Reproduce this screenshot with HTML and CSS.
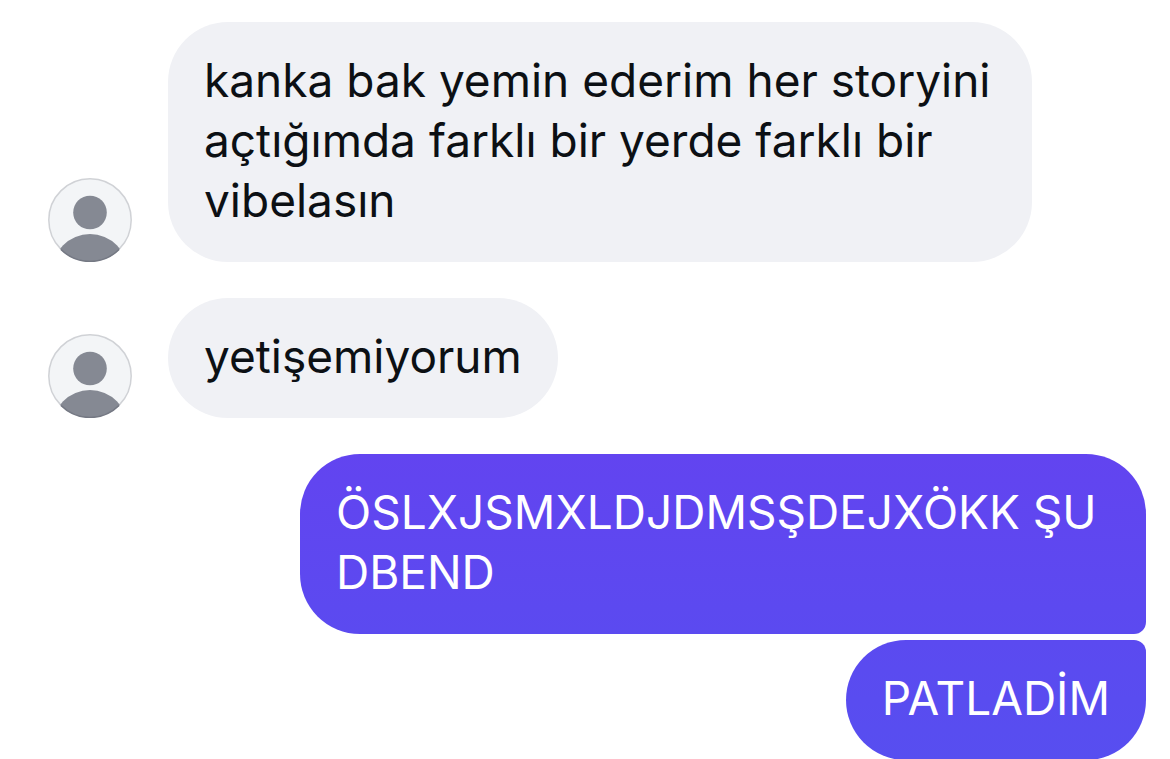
FILE: index.html
```html
<!DOCTYPE html>
<html lang="tr">
<head>
<meta charset="utf-8">
<meta name="viewport" content="width=device-width, initial-scale=1">
<title>Sohbet</title>
<link rel="stylesheet" href="styles.css">
</head>
<body>
<main class="chat">
  <div class="row received">
    <svg class="avatar" viewBox="0 0 84 84" aria-hidden="true">
      <defs><clipPath id="disc"><circle cx="42" cy="42" r="41.5"/></clipPath></defs>
      <circle cx="42" cy="42" r="41.2" fill="#f3f5f7" stroke="#d0d2d6" stroke-width="1.5"/>
      <g fill="#858993" clip-path="url(#disc)"><circle cx="42" cy="34.5" r="16.8"/><circle cx="42" cy="94" r="38"/></g>
      <path d="M13 71.500A41.200 41.200 0 0 0 71 71.500" fill="none" stroke="#747883" stroke-width="1.500"/>
    </svg>
    <p class="bubble">kanka bak yemin ederim her storyini açtığımda farklı bir yerde farklı bir vibelasın</p>
  </div>
  <div class="row received">
    <svg class="avatar" viewBox="0 0 84 84" aria-hidden="true">
      <circle cx="42" cy="42" r="41.2" fill="#f3f5f7" stroke="#d0d2d6" stroke-width="1.5"/>
      <g fill="#858993" clip-path="url(#disc)"><circle cx="42" cy="34.5" r="16.8"/><circle cx="42" cy="94" r="38"/></g>
      <path d="M13 71.500A41.200 41.200 0 0 0 71 71.500" fill="none" stroke="#747883" stroke-width="1.500"/>
    </svg>
    <p class="bubble">yetişemiyorum</p>
  </div>
  <div class="sent-group">
    <p class="bubble sent first">ÖSLXJSMXLDJDMSŞDEJXÖKK ŞU<br>DBEND</p>
    <p class="bubble sent last">PATLADİM</p>
  </div>
</main>
</body>
</html>
```
FILE: styles.css
```css
* { box-sizing: border-box; }
body { margin: 0; background: #fff; font-family: Inter, sans-serif; }
.chat { display: flex; flex-direction: column; gap: 36px; padding: 22px 24px 0 48px; }
.row { display: flex; align-items: flex-end; gap: 36px; }
.avatar { width: 84px; height: 84px; flex: none; }
.bubble {
  margin: 0;
  padding: 28px 36px 32px;
  max-width: 864px;
  border-radius: 60px;
  background: #f0f1f5;
  color: #0c1014;
  font-size: 46px;
  line-height: 60px;
}
.sent-group { display: flex; flex-direction: column; align-items: flex-end; gap: 6px; }
.sent { color: #fff; }
.first { width: 100%; max-width: 846px; background: linear-gradient(#6244f0, #5b4af0); border-bottom-right-radius: 12px; }
.last { background: linear-gradient(#5b4af0, #574ef0); border-top-right-radius: 12px; }
```
